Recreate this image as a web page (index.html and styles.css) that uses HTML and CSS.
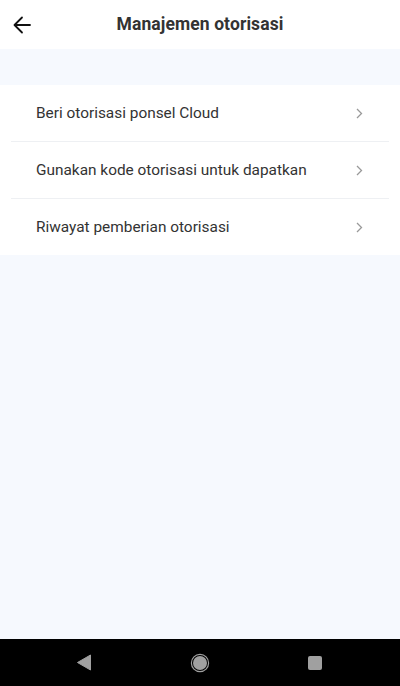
FILE: index.html
```html
<!DOCTYPE html>
<html>
<head>
<meta charset="utf-8">
<link rel="stylesheet" href="styles.css">
</head>
<body>
<div class="app">
  <header class="topbar">
    <button class="back" aria-label="Kembali">
      <svg width="18" height="18" viewBox="0 0 18 18"><path d="M17 9H2M9 1.5L1.5 9L9 16.5" fill="none" stroke="#111" stroke-width="1.8" stroke-linecap="round" stroke-linejoin="round"/></svg>
    </button>
    <h1 class="title">Manajemen otorisasi</h1>
  </header>
  <div class="band"></div>
  <ul class="list">
    <li class="item"><span class="label">Beri otorisasi ponsel Cloud</span><svg class="chev" width="7" height="11" viewBox="0 0 7 11"><path d="M1 1l4.5 4.5L1 10" fill="none" stroke="#999" stroke-width="1.3"/></svg></li>
    <li class="item"><span class="label">Gunakan kode otorisasi untuk dapatkan</span><svg class="chev" width="7" height="11" viewBox="0 0 7 11"><path d="M1 1l4.5 4.5L1 10" fill="none" stroke="#999" stroke-width="1.3"/></svg></li>
    <li class="item"><span class="label">Riwayat pemberian otorisasi</span><svg class="chev" width="7" height="11" viewBox="0 0 7 11"><path d="M1 1l4.5 4.5L1 10" fill="none" stroke="#999" stroke-width="1.3"/></svg></li>
  </ul>
  <div class="fill"></div>
  <nav class="sysnav">
    <svg width="16" height="17" viewBox="0 0 16 17"><path d="M14.5 1v15L1.5 8.5z" fill="#a0a0a0" stroke="#a0a0a0" stroke-width="1" stroke-linejoin="round"/></svg>
    <svg width="20" height="20" viewBox="0 0 20 20"><circle cx="10" cy="10" r="8.6" fill="none" stroke="#a0a0a0" stroke-width="1.2"/><circle cx="10" cy="10" r="7" fill="#a0a0a0"/></svg>
    <span class="sq"></span>
  </nav>
</div>
</body>
</html>
```

FILE: styles.css
```css
* { box-sizing: border-box; }
html, body { margin: 0; padding: 0; }
body { font-family: Roboto, "Noto Sans", sans-serif; background: #f6f9fe; }
.app { width: 400px; height: 686px; display: flex; flex-direction: column; }
.topbar { height: 49px; background: #fff; display: flex; align-items: center; justify-content: center; position: relative; }
.back { position: absolute; left: 12px; top: 15px; border: 0; background: none; padding: 0; width: 20px; height: 20px; display: flex; align-items: center; justify-content: center; }
.title { margin: 0 0 1px 0; font-size: 17.5px; font-weight: 700; color: #333; letter-spacing: 0.1px; }
.band { height: 36px; background: #f6f9fe; }
.list { list-style: none; margin: 0; padding: 0 11px; background: #fff; }
.item { height: 57px; display: flex; align-items: center; justify-content: space-between; padding: 0 25px 0 25px; border-bottom: 1px solid #eef0f3; }
.item:last-child { border-bottom: 0; height: 56px; }
.label { font-size: 15.4px; color: #333; }
.chev { margin-right: 1px; }
.fill { flex: 1; background: #f6f9fe; }
.sysnav { height: 47px; background: #000; display: flex; align-items: center; }
.sysnav svg, .sysnav .sq { display: block; }
.sysnav > :nth-child(1) { margin-left: 76px; }
.sysnav > :nth-child(2) { margin-left: 98px; }
.sysnav > :nth-child(3) { margin-left: 98px; }
.sq { width: 14px; height: 14px; background: #a0a0a0; border-radius: 2px; }
```
